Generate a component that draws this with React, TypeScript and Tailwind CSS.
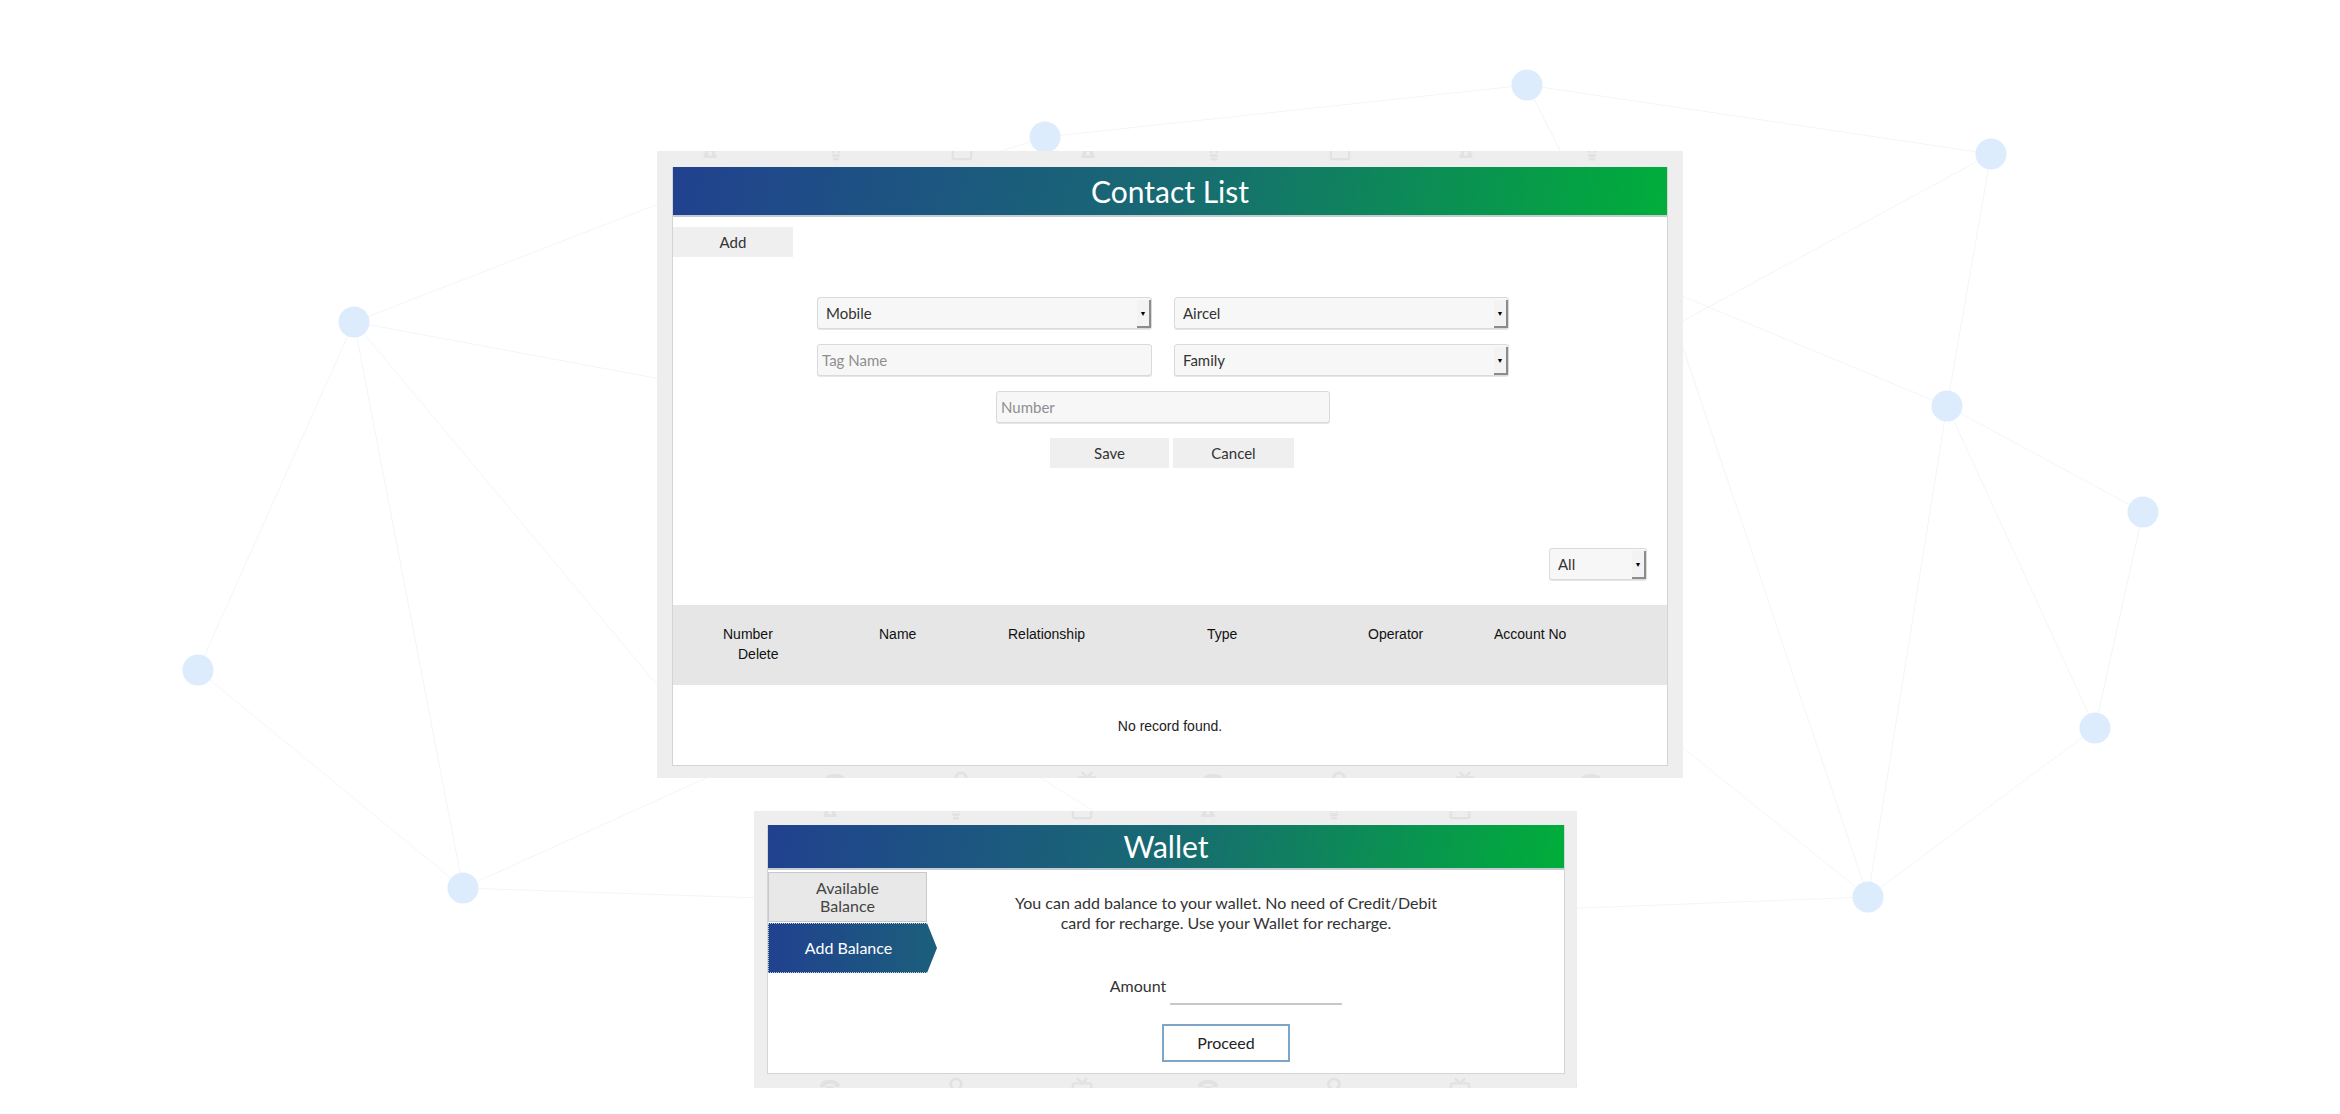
import { Lightbulb, Tv } from "lucide-react";

const nodes: [number, number][] = [
  [1045, 137],
  [1527, 85],
  [1991, 154],
  [354, 322],
  [1947, 406],
  [2143, 512],
  [198, 670],
  [2095, 728],
  [463, 888],
  [1868, 897],
];

// faint connecting lines; ends that run behind the panels are left there
const lines: [number, number, number, number][] = [
  [1045, 137, 1527, 85],
  [1527, 85, 1991, 154],
  [1527, 85, 1600, 230],
  [1045, 137, 880, 190],
  [1045, 137, 1120, 220],
  [1991, 154, 1500, 420],
  [1991, 154, 1947, 406],
  [1947, 406, 1450, 200],
  [1947, 406, 2143, 512],
  [1947, 406, 1868, 897],
  [1947, 406, 2095, 728],
  [2143, 512, 2095, 728],
  [2095, 728, 1868, 897],
  [1868, 897, 1500, 600],
  [1868, 897, 1640, 220],
  [1868, 897, 1400, 915],
  [354, 322, 720, 180],
  [354, 322, 720, 390],
  [354, 322, 198, 670],
  [354, 322, 463, 888],
  [354, 322, 720, 760],
  [198, 670, 463, 888],
  [463, 888, 790, 740],
  [463, 888, 820, 900],
  [980, 740, 1140, 840],
];

function Network() {
  return (
    <svg
      className="pointer-events-none absolute left-0 top-0"
      width={2340}
      height={1114}
      viewBox="0 0 2340 1114"
    >
      {lines.map(([x1, y1, x2, y2], i) => (
        <line key={i} x1={x1} y1={y1} x2={x2} y2={y2} stroke="#f2f5f9" strokeWidth={1} />
      ))}
      {nodes.map(([cx, cy], i) => (
        <circle key={i} cx={cx} cy={cy} r={15.5} fill="#dcecfc" />
      ))}
    </svg>
  );
}

function OldPhone() {
  return (
    <svg viewBox="0 0 24 24" width={24} height={24} fill="currentColor">
      <path d="M2 9.5C2 6 6.5 4 12 4s10 2 10 5.5l-1 2-4.2-.8-.8-2.2c-2.6-.7-5.4-.7-8 0l-.8 2.2-4.2.8z" />
      <path d="M7.5 12.5 9 10h6l1.5 2.5L19 20H5z" />
      <circle cx={12} cy={15.5} r={2.2} fill="#eeeeee" />
    </svg>
  );
}

// faint phone / bulb / tv pattern that peeks out of the grey frames
function IconRow({ className }: { className: string }) {
  const items = Array.from({ length: 9 }, (_, i) => i % 3);
  return (
    <div className={`pointer-events-none absolute left-0 flex gap-[101px] text-[#e2e2e2] ${className}`}>
      {items.map((k, i) => (
        <span key={i} className="flex h-[25px] w-[25px] items-center justify-center">
          {k === 0 && <OldPhone />}
          {k === 1 && <Lightbulb size={22} strokeWidth={3} />}
          {k === 2 && <Tv size={22} strokeWidth={2.5} />}
        </span>
      ))}
    </div>
  );
}

function Select({ value, width }: { value: string; width: string }) {
  return (
    <div className={`relative h-[32px] ${width}`}>
      <select
        defaultValue={value}
        className="h-full w-full appearance-none rounded-[3px] border border-[#dadada] bg-[#f7f7f7] pl-[8px] text-[15px] text-[#333] shadow-[0_1px_0_#e6e6e6] outline-none"
      >
        <option>{value}</option>
      </select>
      <span className="pointer-events-none absolute right-[1px] top-[3px] bottom-[1px] flex w-[14px] items-center justify-center border-r-2 border-b-2 border-[#8c8c8c] bg-[#f3f3f3] text-[7px] leading-none text-black">
        ▼
      </span>
    </div>
  );
}

function Field({ placeholder, width }: { placeholder: string; width: string }) {
  return (
    <input
      placeholder={placeholder}
      className={`h-[32px] ${width} rounded-[3px] border border-[#dadada] bg-[#f7f7f7] pl-[4px] text-[15px] text-[#333] shadow-[0_1px_0_#e6e6e6] outline-none placeholder:text-[#8f8f8f]`}
    />
  );
}

export default function App() {
  return (
    <div className="relative h-[1114px] w-full overflow-hidden bg-white font-['Lato',sans-serif] text-[#333]">
      <Network />

      <div className="relative flex flex-col pt-[151px]">
        {/* contact list */}
        <section className="relative ml-[657px] w-[1026px] overflow-hidden bg-[#eeeeee] px-[15px] pt-[16px] pb-[12px]">
          <IconRow className="top-[-14px] pl-[40px]" />
          <IconRow className="bottom-[-16px] pl-[165px]" />
          <div className="relative border-x border-b border-[#d4d4d4] bg-white">
            <header className="flex h-[50px] items-center justify-center border-b-2 border-[#c3ccd3] bg-[linear-gradient(100deg,#21418f_0%,#186a72_50%,#00ae3a_100%)] text-[30px] text-white">
              Contact List
            </header>

            <div className="mt-[10px]">
              <button className="h-[30px] w-[120px] bg-[#efefef] text-[15px] text-[#333]">Add</button>
            </div>

            <form onSubmit={(e) => e.preventDefault()} className="mt-[40px] flex flex-col">
              <div className="flex gap-[22px] pl-[144px]">
                <Select value="Mobile" width="w-[335px]" />
                <Select value="Aircel" width="w-[335px]" />
              </div>
              <div className="mt-[15px] flex gap-[22px] pl-[144px]">
                <Field placeholder="Tag Name" width="w-[335px]" />
                <Select value="Family" width="w-[335px]" />
              </div>
              <div className="mt-[15px] pl-[323px]">
                <Field placeholder="Number" width="w-[334px]" />
              </div>
              <div className="mt-[15px] flex gap-[4px] pl-[377px]">
                <button className="h-[30px] w-[119px] bg-[#efefef] text-[15px] text-[#333]">Save</button>
                <button type="button" className="h-[30px] w-[121px] bg-[#efefef] text-[15px] text-[#333]">
                  Cancel
                </button>
              </div>
            </form>

            <div className="mt-[80px] flex justify-end pr-[20px]">
              <Select value="All" width="w-[98px]" />
            </div>

            <div className="mt-[25px] h-[80px] bg-[#e6e6e6] pt-[19px] font-['Liberation_Sans',Arial,sans-serif] text-[14px] leading-[20px] text-[#111]">
              <div className="flex pl-[50px]">
                <span className="w-[156px]">Number</span>
                <span className="w-[129px]">Name</span>
                <span className="w-[199px]">Relationship</span>
                <span className="w-[161px]">Type</span>
                <span className="w-[126px]">Operator</span>
                <span>Account No</span>
              </div>
              <div className="pl-[65px]">Delete</div>
            </div>

            <div className="flex h-[80px] items-center justify-center pt-[3px] font-['Liberation_Sans',Arial,sans-serif] text-[14px] text-[#222]">
              No record found.
            </div>
          </div>
        </section>

        {/* wallet */}
        <section className="relative mt-[33px] ml-[754px] w-[823px] overflow-hidden bg-[#eeeeee] pt-[14px] pr-[12px] pb-[14px] pl-[13px]">
          <IconRow className="top-[-15px] pl-[63px]" />
          <IconRow className="bottom-[-12px] pl-[63px]" />
          <div className="relative border-x border-b border-[#d4d4d4] bg-white">
            <header className="flex h-[45px] items-center justify-center border-b-2 border-[#c3ccd3] bg-[linear-gradient(100deg,#21418f_0%,#186a72_50%,#00ae3a_100%)] text-[30px] text-white">
              Wallet
            </header>

            <div className="flex">
              <div className="flex w-[159px] flex-col pt-[2px]">
                <div className="flex h-[50px] items-center justify-center border border-[#c9c9c9] bg-[#e8e8e8] text-center text-[16px] leading-[18px] text-[#444]">
                  Available
                  <br />
                  Balance
                </div>
                <div className="relative z-10 mt-[1px] flex h-[50px] w-[169px] items-center border-y border-l border-dotted border-[#b9c6d6] bg-[linear-gradient(90deg,#21418f_0%,#1b5f7b_100%)] text-[16px] text-white shadow-[0_3px_4px_rgba(0,0,0,0.08)] [clip-path:polygon(0_0,159px_0,100%_50%,159px_100%,0_100%)]">
                  <span className="w-[159px] text-center">Add Balance</span>
                </div>
              </div>

              <div className="flex flex-1 flex-col items-center pt-[23px] pr-[39px] pb-[11px]">
                <p className="text-center text-[16px] leading-[20px] text-[#333]">
                  You can add balance to your wallet. No need of Credit/Debit
                  <br />
                  card for recharge. Use your Wallet for recharge.
                </p>
                <div className="mt-[40px] flex items-end gap-[4px]">
                  <label htmlFor="amount" className="mb-[9px] text-[16px] leading-[20px] text-[#333]">
                    Amount
                  </label>
                  <input id="amount" className="h-[32px] w-[172px] border-b-2 border-[#c8c8c8] outline-none" />
                </div>
                <button className="mt-[19px] h-[38px] w-[128px] border-2 border-[#7ea6c9] bg-white text-[16px] text-[#222]">
                  Proceed
                </button>
              </div>
            </div>
          </div>
        </section>
      </div>
    </div>
  );
}
